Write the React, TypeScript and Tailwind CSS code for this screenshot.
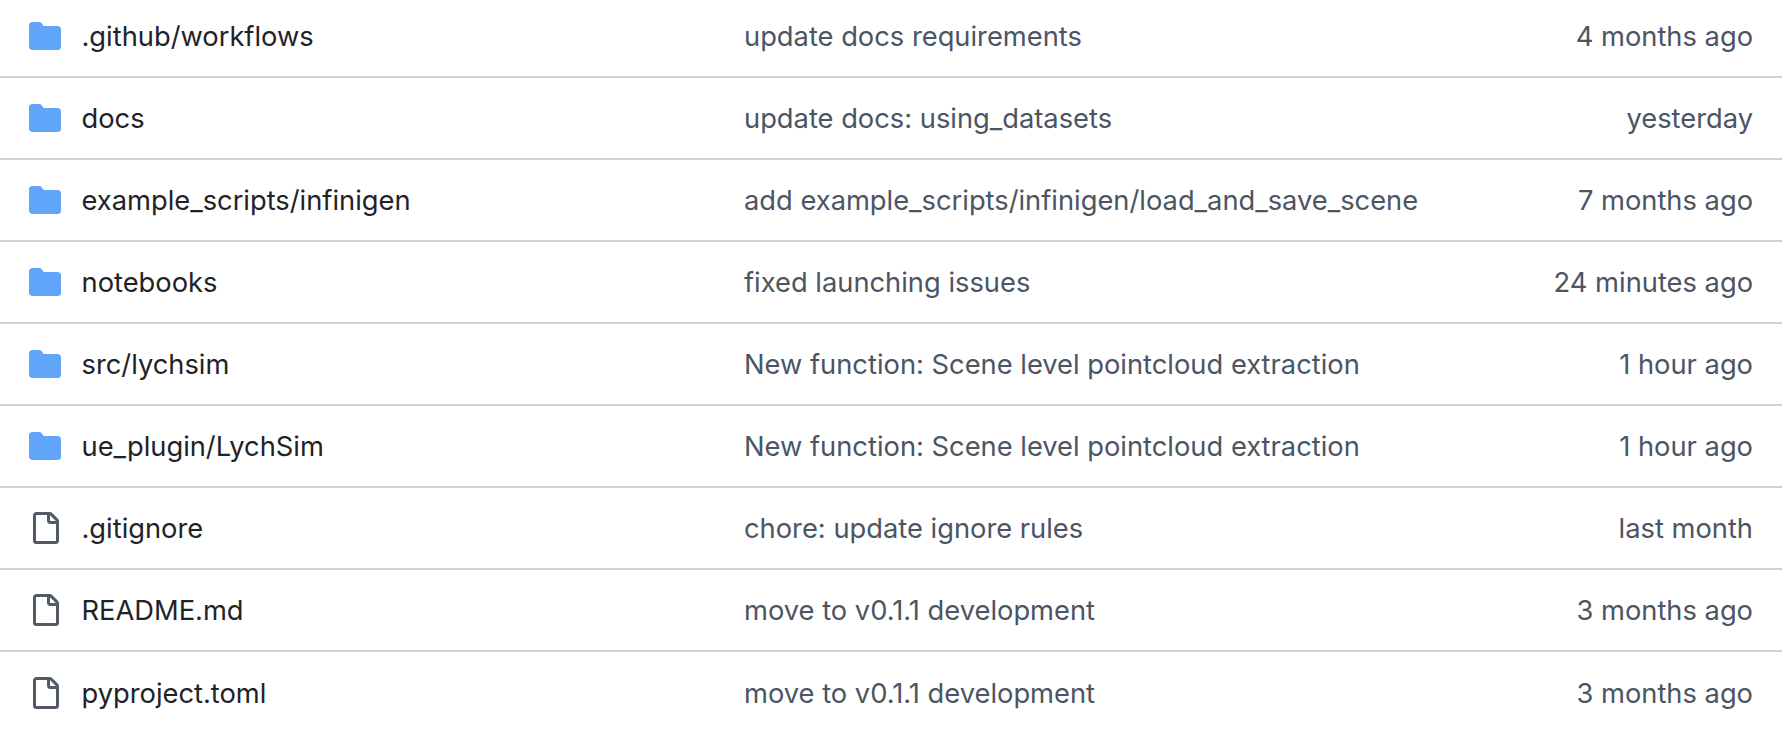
import React from 'react';

type Entry = { name: string; message: string; age: string; isDir?: boolean };

const entries: Entry[] = [
    { name: '.github/workflows', message: 'update docs requirements', age: '4 months ago', isDir: true },
    { name: 'docs', message: 'update docs: using_datasets', age: 'yesterday', isDir: true },
    { name: 'example_scripts/infinigen', message: 'add example_scripts/infinigen/load_and_save_scene', age: '7 months ago', isDir: true },
    { name: 'notebooks', message: 'fixed launching issues', age: '24 minutes ago', isDir: true },
    { name: 'src/lychsim', message: 'New function: Scene level pointcloud extraction', age: '1 hour ago', isDir: true },
    { name: 'ue_plugin/LychSim', message: 'New function: Scene level pointcloud extraction', age: '1 hour ago', isDir: true },
    { name: '.gitignore', message: 'chore: update ignore rules', age: 'last month' },
    { name: 'README.md', message: 'move to v0.1.1 development', age: '3 months ago' },
    { name: 'pyproject.toml', message: 'move to v0.1.1 development', age: '3 months ago' },
];

const FolderIcon = () => (
    <svg viewBox="0 0 16 16" className="h-8 w-8 shrink-0 fill-[#60a5fa]">
        <path d="M1.75 1A1.75 1.75 0 0 0 0 2.75v10.5C0 14.216.784 15 1.75 15h12.5A1.75 1.75 0 0 0 16 13.25v-8.5A1.75 1.75 0 0 0 14.25 3H7.5a.25.25 0 0 1-.2-.1l-.9-1.2C6.07 1.26 5.55 1 5 1H1.75Z" />
    </svg>
);

const FileIcon = () => (
    <svg viewBox="0 0 16 16" className="h-8 w-8 shrink-0 fill-[#525a66]">
        <path d="M2 1.75C2 .784 2.784 0 3.75 0h6.586c.464 0 .909.184 1.237.513l2.914 2.914c.329.328.513.773.513 1.237v9.586A1.75 1.75 0 0 1 13.25 16h-9.5A1.75 1.75 0 0 1 2 14.25Zm1.75-.25a.25.25 0 0 0-.25.25v12.5c0 .138.112.25.25.25h9.5a.25.25 0 0 0 .25-.25V6h-2.75A1.75 1.75 0 0 1 9 4.25V1.5Zm6.75.062V4.25c0 .138.112.25.25.25h2.688l-.011-.013-2.914-2.914-.013-.011Z" />
    </svg>
);

const App: React.FC = () => {
    return (
        <div className="h-[730px] w-[1782px] overflow-hidden bg-white font-['Inter',sans-serif] text-[27.3px]">
            <div className="-mt-1">
                {entries.map((entry, i) => (
                    <div
                        key={entry.name}
                        className={`flex h-[82px] items-center pl-[29px] pr-[29px] ${i < entries.length - 1 ? 'border-b-2 border-[#ced2dc]' : ''}`}
                    >
                        {entry.isDir ? <FolderIcon /> : <FileIcon />}
                        <span className="ml-[20.5px] w-[662.5px] pt-[2px] text-[#1f2328]">{entry.name}</span>
                        <span className="flex-1 pt-[2px] text-[#4b5563]">{entry.message}</span>
                        <span className="pt-[2px] text-[#4b5563]">{entry.age}</span>
                    </div>
                ))}
            </div>
        </div>
    );
};

export default App;
